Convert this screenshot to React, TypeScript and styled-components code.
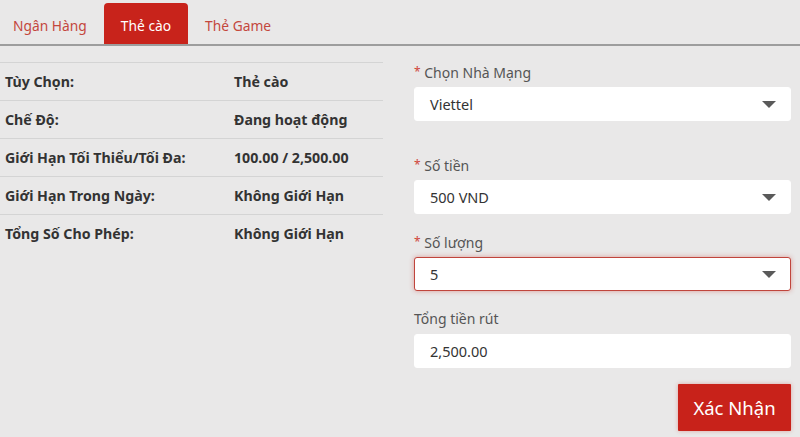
import React from "react";
import styled, { createGlobalStyle } from "styled-components";

const GlobalStyle = createGlobalStyle`
  html, body {
    margin: 0;
    padding: 0;
    background: #e9e8e8;
  }
  body {
    font-family: "Noto Sans", "Open Sans", sans-serif;
    color: #333;
  }
`;

type Row = { label: string; value: string };

const rows: Row[] = [
  { label: "Tùy Chọn:", value: "Thẻ cào" },
  { label: "Chế Độ:", value: "Đang hoạt động" },
  { label: "Giới Hạn Tối Thiểu/Tối Đa:", value: "100.00 / 2,500.00" },
  { label: "Giới Hạn Trong Ngày:", value: "Không Giới Hạn" },
  { label: "Tổng Số Cho Phép:", value: "Không Giới Hạn" },
];

const tabs = ["Ngân Hàng", "Thẻ cào", "Thẻ Game"];

function Caret() {
  return (
    <svg width="14" height="7" viewBox="0 0 14 7">
      <path d="M0 0 L14 0 L7 7 Z" fill="#5a5a5a" />
    </svg>
  );
}

export default function App() {
  return (
    <Page>
      <GlobalStyle />
      <TabBar>
        {tabs.map((t) => (
          <Tab key={t} active={t === "Thẻ cào"}>
            {t}
          </Tab>
        ))}
      </TabBar>
      <Content>
        <InfoTable>
          {rows.map((r) => (
            <InfoRow key={r.label}>
              <InfoLabel>{r.label}</InfoLabel>
              <InfoValue>{r.value}</InfoValue>
            </InfoRow>
          ))}
        </InfoTable>
        <Form>
          <Field spaced>
            <Label>
              <Star>*</Star> Chọn Nhà Mạng
            </Label>
            <Select>
              <span>Viettel</span>
              <Caret />
            </Select>
          </Field>
          <Field>
            <Label>
              <Star>*</Star> Số tiền
            </Label>
            <Select>
              <span>500 VND</span>
              <Caret />
            </Select>
          </Field>
          <Field>
            <Label>
              <Star>*</Star> Số lượng
            </Label>
            <Select focused>
              <span>5</span>
              <Caret />
            </Select>
          </Field>
          <Field>
            <Label>Tổng tiền rút</Label>
            <Select>
              <span>2,500.00</span>
            </Select>
          </Field>
          <Actions>
            <SubmitButton>Xác Nhận</SubmitButton>
          </Actions>
        </Form>
      </Content>
    </Page>
  );
}

const Page = styled.div`
  width: 800px;
  height: 437px;
  overflow: hidden;
`;

const TabBar = styled.div`
  display: flex;
  align-items: flex-end;
  height: 46px;
  box-sizing: border-box;
  border-bottom: 2px solid #9d9d9d;
`;

const Tab = styled.div<{ active?: boolean }>`
  height: 41px;
  box-sizing: border-box;
  padding: 3px 17px 0;
  display: flex;
  align-items: center;
  font-size: 13.8px;
  color: ${(p) => (p.active ? "#ffffff" : "#c4473d")};
  background: ${(p) => (p.active ? "#c8231b" : "transparent")};
  border-radius: 4px 4px 0 0;
  &:first-child {
    padding-left: 13px;
  }
`;

const Content = styled.div`
  display: flex;
  padding-top: 16px;
`;

const InfoTable = styled.div`
  width: 383px;
  flex-shrink: 0;
`;

const InfoRow = styled.div`
  display: flex;
  align-items: center;
  height: 38px;
  border-top: 1px solid #d4d4d4;
  padding-left: 5px;
  box-sizing: border-box;
`;

const InfoLabel = styled.div`
  width: 229px;
  font-weight: 700;
  font-size: 14.2px;
  color: #333;
`;

const InfoValue = styled.div`
  font-weight: 700;
  font-size: 14.2px;
  color: #333;
`;

const Form = styled.div`
  margin-left: 31px;
  width: 377px;
  display: flex;
  flex-direction: column;
`;

const Field = styled.div<{ spaced?: boolean }>`
  display: flex;
  flex-direction: column;
  gap: 5px;
  margin-bottom: ${(p) => (p.spaced ? "34px" : "18px")};
`;

const Label = styled.div`
  height: 20px;
  line-height: 20px;
  font-size: 14px;
  color: #555;
`;

const Star = styled.span`
  color: #d0453a;
  font-size: 12px;
  vertical-align: 2px;
`;

const Select = styled.div<{ focused?: boolean }>`
  height: 34px;
  box-sizing: border-box;
  background: #fff;
  border-radius: 3px;
  border: 1px solid ${(p) => (p.focused ? "#c0453c" : "#fff")};
  box-shadow: ${(p) => (p.focused ? "0 0 5px rgba(205, 60, 50, 0.45)" : "none")};
  display: flex;
  align-items: center;
  justify-content: space-between;
  padding: 0 14px 0 15px;
  font-size: 14.5px;
  color: #333;
`;

const Actions = styled.div`
  display: flex;
  justify-content: flex-end;
  margin-top: -2px;
`;

const SubmitButton = styled.button`
  width: 113px;
  height: 47px;
  border: none;
  border-radius: 1px;
  background: #c8221a;
  color: #fff;
  font-family: "Noto Sans", "Open Sans", sans-serif;
  font-size: 18.5px;
  box-shadow: 0 0 4px rgba(200, 40, 30, 0.35);
  cursor: pointer;
`;
